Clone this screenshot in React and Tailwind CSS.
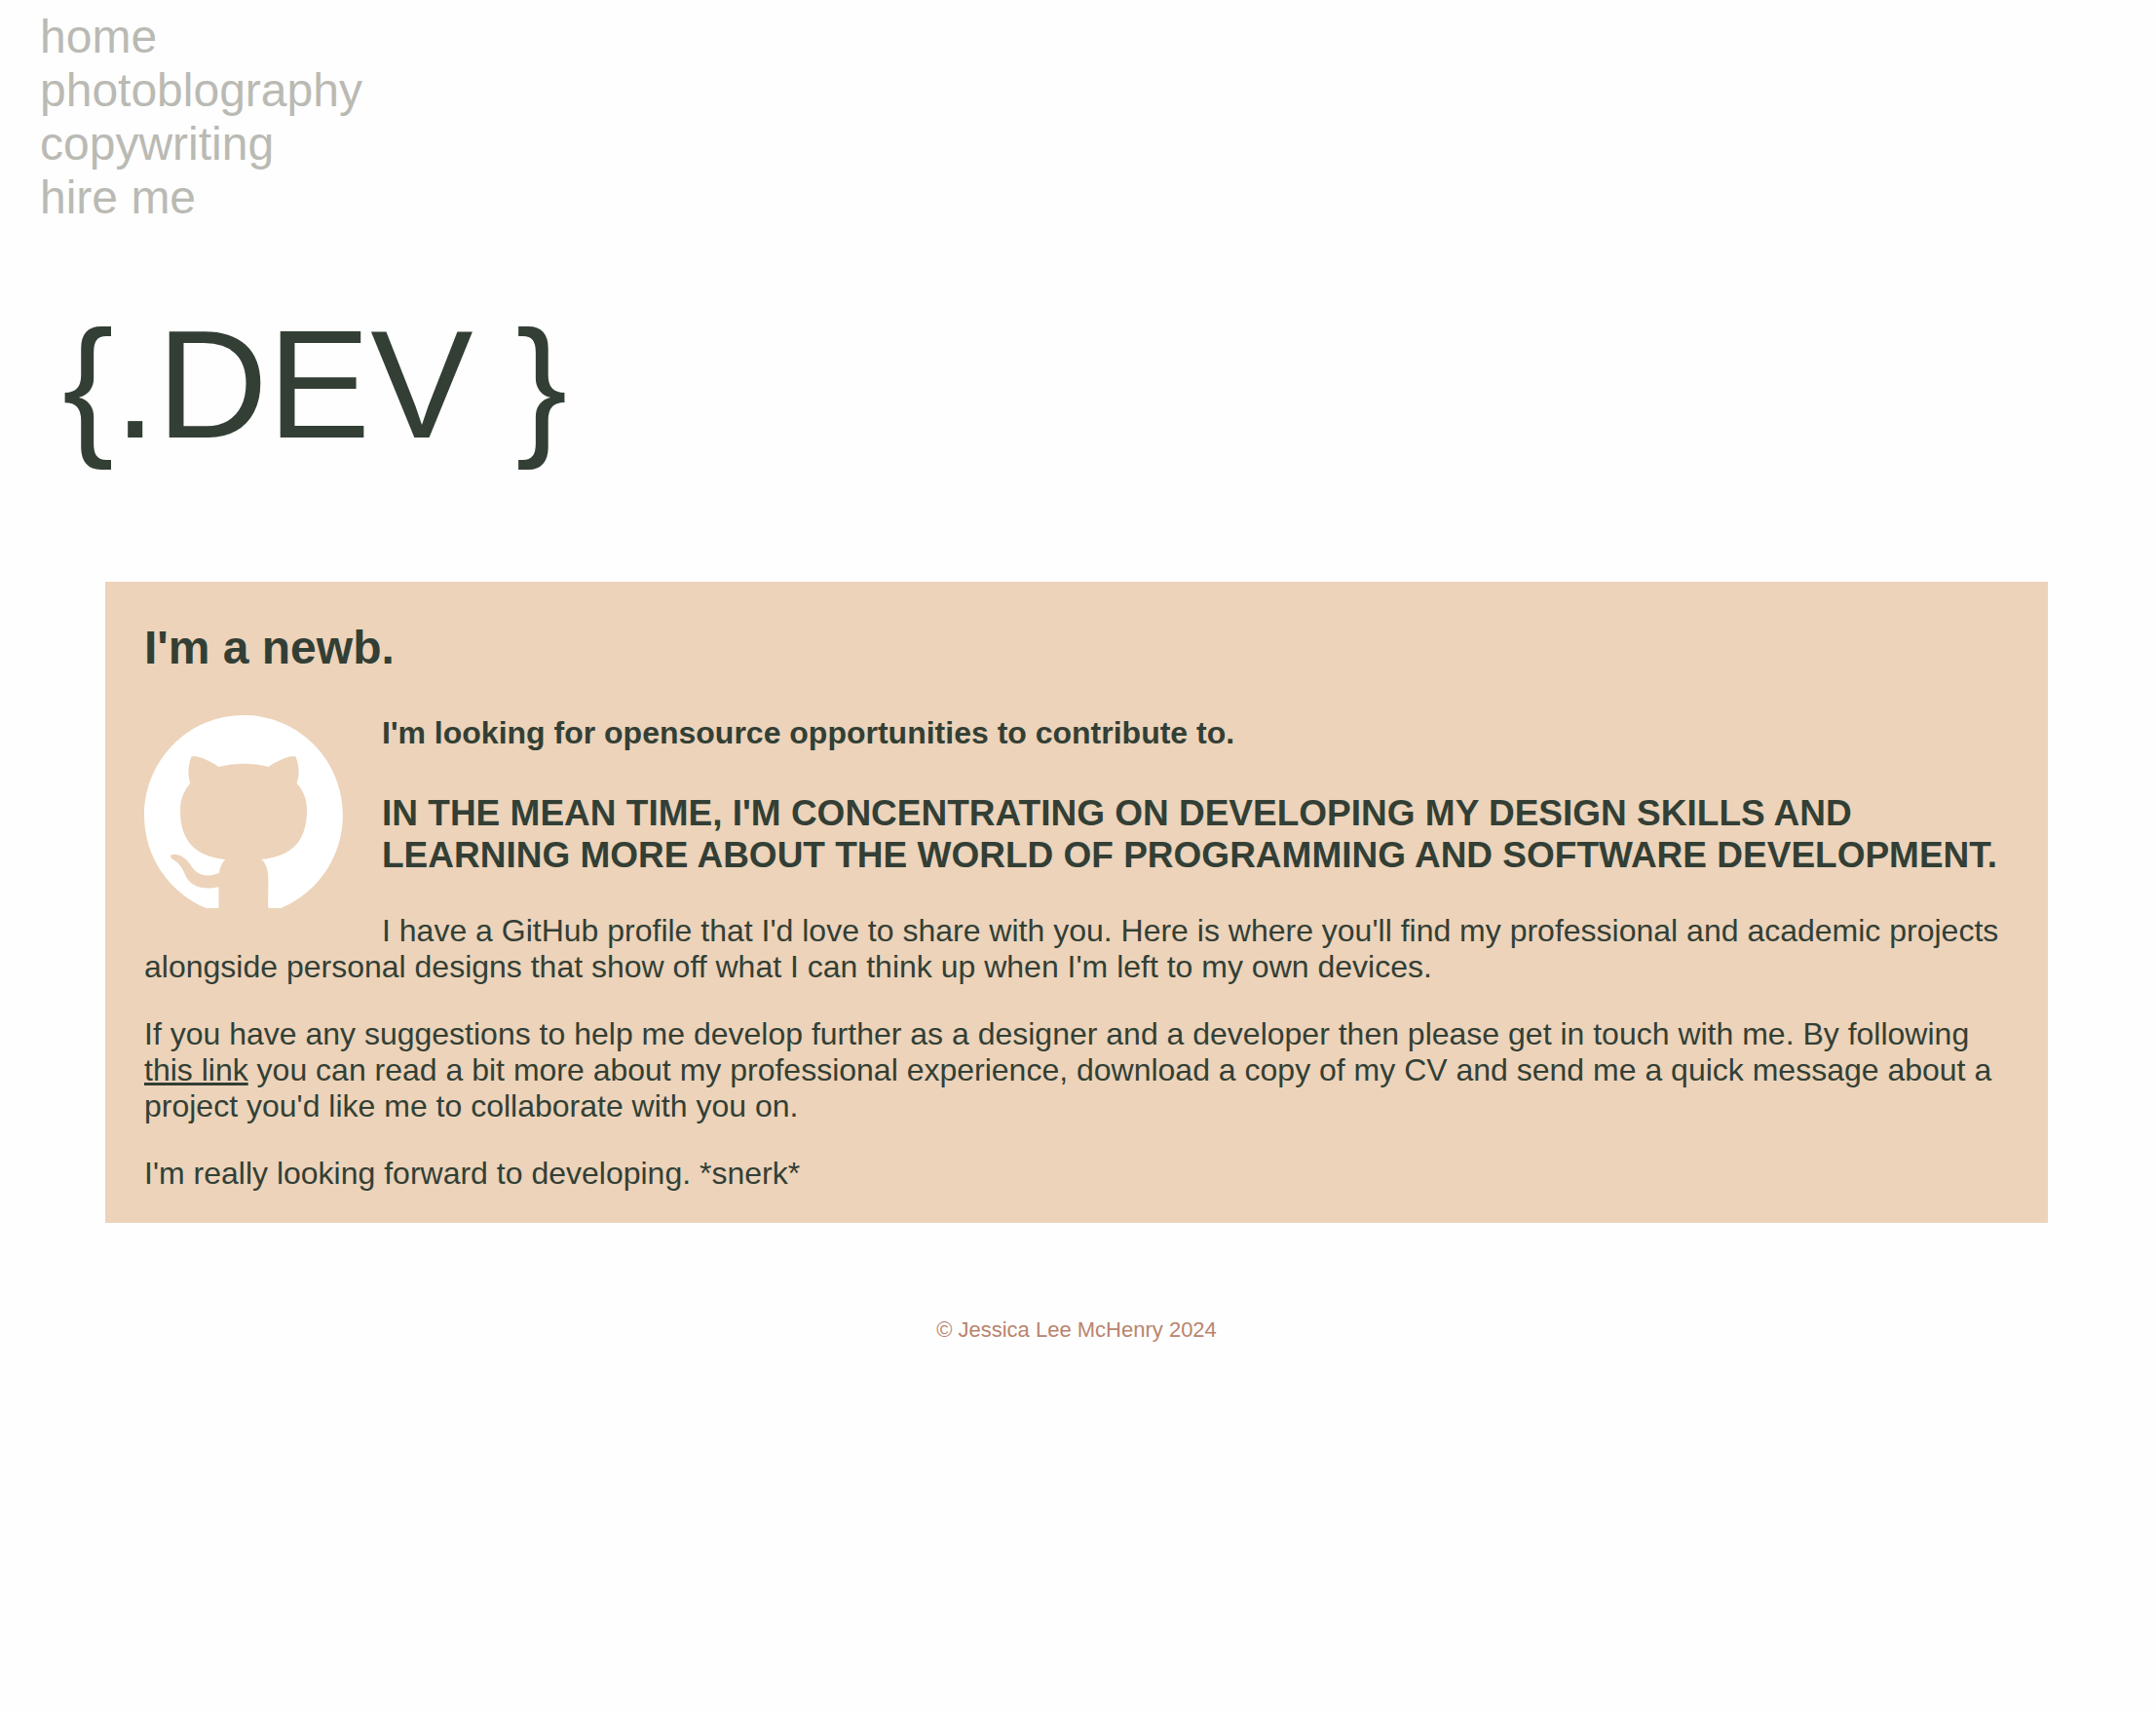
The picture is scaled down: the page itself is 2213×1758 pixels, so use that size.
const links = ["home", "photoblography", "copywriting", "hire me"];

function GitHubMark() {
  return (
    <svg className="float-left mr-10 mb-10 h-[198px] w-[204px] text-white" viewBox="0 0 204 198" fill="currentColor" role="img" aria-label="GitHub">
      <path
        transform="scale(2.088)"
        d="M48.854 0C21.839 0 0 22 0 49.217c0 21.756 13.993 40.172 33.405 46.69 2.427.49 3.316-1.059 3.316-2.362 0-1.141-.08-5.052-.08-9.127-13.59 2.934-16.42-5.867-16.42-5.867-2.184-5.704-5.42-7.17-5.42-7.17-4.448-3.015.324-3.015.324-3.015 4.934.326 7.523 5.052 7.523 5.052 4.367 7.496 11.404 5.378 14.235 4.074.404-3.178 1.699-5.378 3.074-6.6-10.839-1.141-22.243-5.378-22.243-24.283 0-5.378 1.94-9.778 5.014-13.2-.485-1.222-2.184-6.275.486-13.038 0 0 4.125-1.304 13.426 5.052a46.97 46.97 0 0 1 12.214-1.63c4.125 0 8.33.571 12.213 1.63 9.302-6.356 13.427-5.052 13.427-5.052 2.67 6.763.97 11.816.485 13.038 3.155 3.422 5.015 7.822 5.015 13.2 0 18.905-11.404 23.06-22.324 24.283 1.78 1.548 3.316 4.481 3.316 9.126 0 6.6-.08 11.897-.08 13.526 0 1.304.89 2.853 3.316 2.364 19.412-6.52 33.405-24.935 33.405-46.691C97.707 22 75.788 0 48.854 0z"
      />
    </svg>
  );
}

export default function App() {
  return (
    <div className="min-h-screen bg-[#fefefe] pt-2.5 font-['Liberation_Sans',Arial,sans-serif] text-[#333f35]">
      <nav className="px-[41px] text-[48px] leading-[55px] text-[#babab4]">
        <ul>
          {links.map((name) => (
            <li key={name}>
              <a href="#">{name}</a>
            </li>
          ))}
        </ul>
      </nav>
      <h1 className="mt-[72px] px-16 text-[158px] leading-[184px]">{"{.DEV }"}</h1>
      <main className="mt-[111px] mr-[111px] ml-[108px] bg-[#ecd3ba] px-10 pt-10 pb-8 text-[32px] leading-[37px]">
        <h2 className="mb-[42px] text-[48px] leading-[55px] font-bold">I'm a newb.</h2>
        <GitHubMark />
        <h4 className="font-bold">I'm looking for opensource opportunities to contribute to.</h4>
        <h3 className="mt-[42px] text-[37px] leading-[43px] font-bold uppercase">
          In the mean time, I'm concentrating on developing my design skills and learning more about the world of programming and software development.
        </h3>
        <p className="mt-[38px]">
          I have a GitHub profile that I'd love to share with you. Here is where you'll find my professional and academic projects alongside personal designs that show off what I can think up when I'm left to my own devices.
        </p>
        <p className="mt-8">
          If you have any suggestions to help me develop further as a designer and a developer then please get in touch with me. By following{" "}
          <a href="#" className="underline">this link</a> you can read a bit more about my professional experience, download a copy of my CV and send me a quick message about a project you'd like me to collaborate with you on.
        </p>
        <p className="mt-8">I'm really looking forward to developing. *snerk*</p>
      </main>
      <footer className="mt-24 mr-[111px] ml-[108px] text-center text-[22px] leading-[27px] text-[#b9846d]">© Jessica Lee McHenry 2024</footer>
    </div>
  );
}
